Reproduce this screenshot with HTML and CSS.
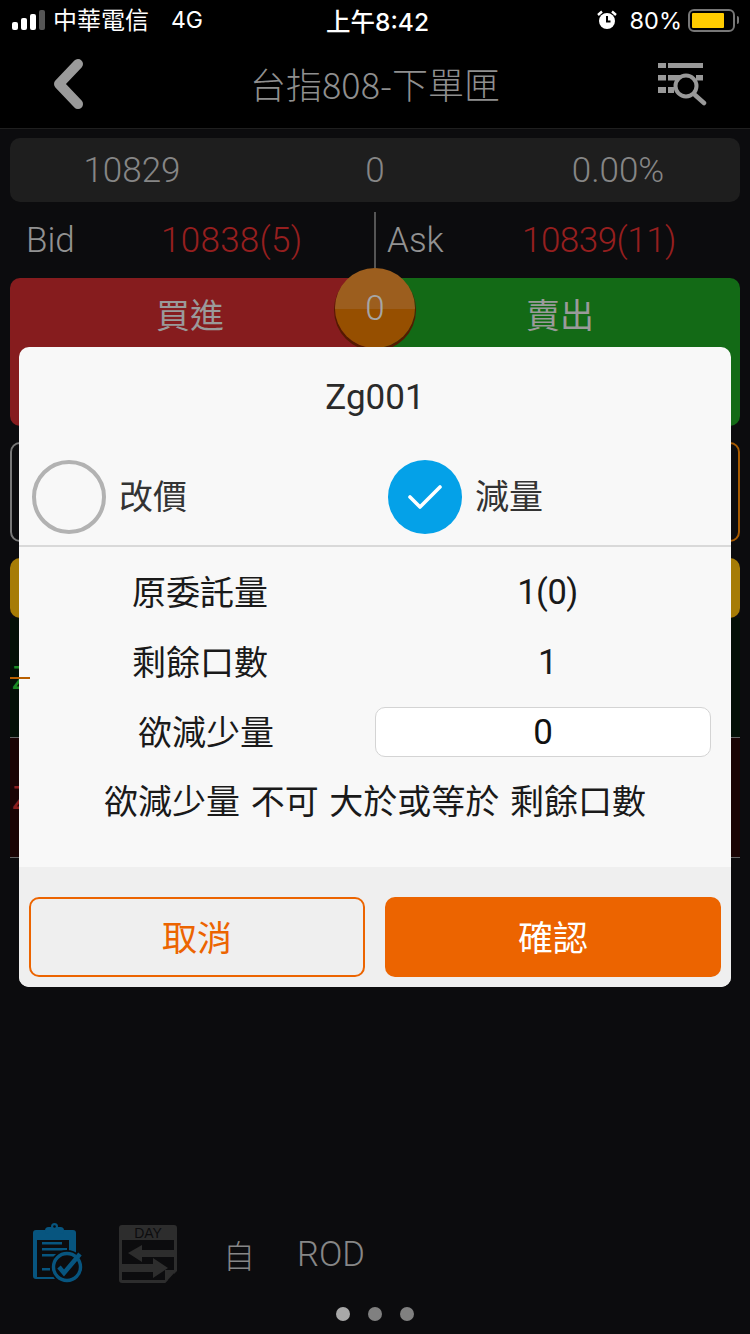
FILE: index.html
```html
<!DOCTYPE html>
<html lang="zh-Hant">
<head>
<meta charset="utf-8">
<title>台指808-下單匣</title>
<link rel="stylesheet" href="styles.css">
</head>
<body>
<div class="page">
  <header class="top">
    <div class="status">
      <div class="status-left">
        <svg class="signal" viewBox="0 0 34 20" width="34" height="20"><rect x="0" y="12" width="6" height="8" rx="2" fill="#fff"/><rect x="9" y="8" width="6" height="12" rx="2" fill="#fff"/><rect x="18" y="4" width="6" height="16" rx="2" fill="#fff"/><rect x="27" y="0" width="6" height="20" rx="2" fill="#555"/></svg>
        <span class="carrier">中華電信</span>
        <span class="net">4G</span>
      </div>
      <div class="clock">上午8:42</div>
      <div class="status-right">
        <svg class="alarm" viewBox="0 0 20 20" width="20" height="20"><circle cx="10" cy="11" r="8" fill="#fff"/><path d="M10 6v5.5h3.5" fill="none" stroke="#000" stroke-width="2"/><path d="M1 5l4-3.5M19 5l-4-3.5" stroke="#fff" stroke-width="2.4" fill="none"/></svg>
        <span class="pct">80%</span>
        <div class="battery"><div class="level"></div></div>
        <div class="nub"></div>
      </div>
    </div>
    <nav class="nav">
      <svg class="back" viewBox="0 0 34 50" width="34" height="50"><path d="M26 5L7 25l19 20" fill="none" stroke="#9a9a9a" stroke-width="10" stroke-linecap="round" stroke-linejoin="round"/></svg>
      <h1 class="title">台指808-下單匣</h1>
      <svg class="search" viewBox="0 0 50 44" width="50" height="44"><g fill="#999"><rect x="0" y="1" width="8" height="5"/><rect x="10" y="1" width="35" height="5"/><rect x="0" y="13" width="8" height="5.5"/><rect x="10" y="13" width="12" height="5.5"/><rect x="38" y="13" width="7" height="5.5"/><rect x="0" y="25" width="8" height="6"/><rect x="10" y="25" width="6" height="6"/></g><circle cx="28" cy="24" r="10.5" fill="#000" stroke="#999" stroke-width="4"/><path d="M37 33l9 8" stroke="#999" stroke-width="4.5" stroke-linecap="round"/></svg>
    </nav>
  </header>

  <main class="body">
    <section class="quote"><span>10829</span><span>0</span><span>0.00%</span></section>
    <section class="bidask">
      <div class="side"><span class="lbl">Bid</span><span class="red">10838(5)</span></div>
      <div class="side side-r"><span class="lbl">Ask</span><span class="red">10839(11)</span></div>
    </section>
    <section class="trade">
      <div class="buy">買進</div>
      <div class="sell">賣出</div>
      <div class="coin"><span>0</span></div>
    </section>
    <section class="boxes"><div class="box gray"></div><div class="box orange"></div></section>
    <section class="gold"></section>
    <section class="row row-g"><i class="mark"></i><span class="z green">Z</span></section>
    <section class="row row-r"><span class="z red2">Z</span></section>
    <div class="spacer"></div>
    <section class="tools">
      <svg class="ico" viewBox="0 0 52 62" width="52" height="62">
        <rect x="0" y="7" width="43" height="49" rx="3" fill="#07557f"/>
        <rect x="12" y="4" width="19" height="7" rx="3.5" fill="#07557f"/>
        <circle cx="21.5" cy="3.5" r="3.5" fill="#07557f"/>
        <circle cx="21.5" cy="3.5" r="1.3" fill="#0c0c0e"/>
        <rect x="4" y="17" width="32" height="37" fill="#0c0c0e"/>
        <g fill="#07557f"><rect x="9" y="19" width="20" height="2.5"/><rect x="9" y="25" width="25" height="2.5"/><rect x="9" y="31" width="20" height="2.5"/><rect x="9" y="45" width="8" height="2.5"/></g>
        <circle cx="34" cy="44" r="17" fill="#0c0c0e"/>
        <circle cx="34" cy="44" r="13.5" fill="none" stroke="#07557f" stroke-width="3.4"/>
        <path d="M26 44l5 6L47 31" fill="none" stroke="#07557f" stroke-width="4.5"/>
      </svg>
      <svg class="ico day" viewBox="0 0 58 60" width="58" height="60">
        <path d="M3 1h52a3 3 0 0 1 3 3v43L46 59H3a3 3 0 0 1-3-3V4a3 3 0 0 1 3-3z" fill="#2d2d2d"/>
        <text x="29" y="14" class="daytxt">DAY</text>
        <rect x="3" y="16" width="52" height="40" fill="#0c0c0e"/>
        <path d="M9 29l14-8v5h32v7H23v5z" fill="#2d2d2d"/>
        <path d="M0 40h34v-6l15 10-15 10v-6H0z" fill="#2d2d2d"/>
        <path d="M58 46L46 59V46z" fill="#2d2d2d"/>
      </svg>
      <span class="tool-t zi">自</span>
      <span class="tool-t rod">ROD</span>
    </section>
    <section class="dots"><i class="on"></i><i></i><i></i></section>
  </main>

  <div class="modal">
    <div class="m-head">Zg001</div>
    <div class="m-radio">
      <div class="opt"><span class="radio"></span><span>改價</span></div>
      <div class="opt"><span class="radio sel"><svg viewBox="0 0 34 24" width="34" height="24"><path d="M2 12l10 10L32 2" fill="none" stroke="#fff" stroke-width="3.6" stroke-linecap="round" stroke-linejoin="round"/></svg></span><span>減量</span></div>
    </div>
    <div class="m-body">
      <div class="m-row"><span class="k">原委託量</span><span class="v">1(0)</span></div>
      <div class="m-row"><span class="k">剩餘口數</span><span class="v">1</span></div>
      <div class="m-row"><span class="k k3">欲減少量</span><input class="inp" value="0"></div>
      <p class="note">欲減少量 不可 大於或等於 剩餘口數</p>
    </div>
    <div class="m-foot">
      <button class="btn cancel">取消</button>
      <button class="btn ok">確認</button>
    </div>
  </div>
</div>
</body>
</html>
```

FILE: styles.css
```css
* { box-sizing: border-box; }
html, body { margin: 0; padding: 0; }
body { background: #0c0c0e; font-family: Roboto, "Noto Sans CJK TC", sans-serif; }
.page { position: relative; width: 750px; height: 1334px; overflow: hidden; background: #0c0c0e; display: flex; flex-direction: column; }

.top { background: #000; height: 129px; border-bottom: 1px solid #1f1f1f; flex: none; }
.status { height: 40px; display: flex; align-items: center; justify-content: space-between; color: #fff; position: relative; padding: 0 11px 0 12px; font-family: "Inter", "Noto Sans CJK TC", sans-serif; }
.status-left { display: flex; align-items: center; }
.signal { margin-right: 7px; }
.carrier { font-size: 24px; line-height: 40px; margin-top: -2px; font-family: "Noto Sans CJK TC", sans-serif; }
.net { font-size: 23px; margin-left: 22px; }
.clock { position: absolute; left: 5px; right: 0; text-align: center; font-size: 24.5px; font-weight: 500; }
.status-right { display: flex; align-items: center; position: relative; z-index: 1; }
.alarm { margin-right: 13px; }
.pct { font-size: 23.5px; margin-right: 6px; }
.battery { width: 47px; height: 23px; border: 2px solid #777; border-radius: 6px; padding: 2px; }
.level { width: 32px; height: 15px; background: #ffcc00; border-radius: 1px; }
.nub { width: 2px; height: 8px; background: #777; margin-left: 2px; border-radius: 0 2px 2px 0; }

.nav { height: 88px; display: flex; align-items: center; justify-content: space-between; padding: 0 42px 0 52px; position: relative; }
.title { position: absolute; left: 0; right: 0; top: 18px; line-height: 50px; margin: 0; text-align: center; font-size: 36px; font-weight: 300; color: #8f8f8f; font-family: "Noto Sans CJK TC", sans-serif; }
.search { position: relative; }
.back { position: relative; }

.body { flex: 1; display: flex; flex-direction: column; padding: 9px 10px 0; min-height: 0; }
.quote { height: 64px; flex: none; background: #1e1e1e; border-radius: 10px; display: grid; grid-template-columns: 244px 1fr 244px; align-items: center; text-align: center; font-size: 35px; font-weight: 300; color: #868686; }
.bidask { height: 56px; flex: none; margin-top: 10px; display: flex; position: relative; font-size: 35px; font-weight: 300; }
.side { flex: 0 0 calc(50% + 1px); display: flex; align-items: center; padding-left: 16px; border-right: 2px solid #555; height: 56px; }
.side-r { flex: 1; border-right: 0; padding-left: 11px; }
.lbl { color: #929292; width: 135px; }
.red { color: #961f1f; letter-spacing: 0.3px; }
.side-r .red { letter-spacing: -0.5px; }
.trade { flex: none; height: 148px; margin-top: 10px; display: flex; border-radius: 10px; position: relative; font-size: 34px; color: #9a9a9a; font-family: "Noto Sans CJK TC", sans-serif; }
.buy, .sell { flex: 1; padding-top: 11px; text-align: center; }
.buy { background: #861c1e; border-radius: 10px 0 0 10px; padding-right: 10px; }
.sell { background: #136a16; border-radius: 0 10px 10px 0; }
.coin { position: absolute; left: 325px; top: -10px; width: 80px; height: 80px; border-radius: 50%; background: linear-gradient(#9c5e1e 0 51%, #964f00 51%); box-shadow: 0 2px 0 1px #551a00; text-align: center; font-family: Roboto, sans-serif; font-size: 35px; font-weight: 300; color: #a6a6a6; line-height: 80px; }
.coin span { position: relative; top: 1px; display: block; }
.boxes { flex: none; height: 100px; margin-top: 16px; display: flex; gap: 20px; }
.box { flex: 1; border-radius: 10px; border: 2px solid #777; }
.box.orange { border-color: #a85a00; }
.gold { flex: none; height: 60px; margin-top: 16px; background: #a67c06; border-radius: 10px; }
.row { flex: none; height: 120px; border-bottom: 1px solid #666; position: relative; font-size: 33px; }
.row-g { background: #031006; }
.row-r { background: #1a0404; }
.z { position: absolute; left: 2px; top: 43px; line-height: 1; font-family: "Liberation Sans", sans-serif; }
.green { color: #1a8a22; }
.red2 { color: #8c1d1d; }
.mark { position: absolute; left: 0; top: 59px; width: 20px; height: 2px; background: #b85f00; z-index: 1; }
.spacer { flex: 1; }
.tools { flex: none; height: 62px; display: flex; align-items: center; padding-left: 23px; position: relative; }
.ico { display: block; flex: none; }
.day { margin-left: 34px; }
.daytxt { font-family: "Liberation Sans", sans-serif; font-size: 14px; fill: #0c0c0e; text-anchor: middle; }
.tool-t { color: #878787; font-size: 32px; }
.zi { margin-left: 46px; line-height: 40px; font-weight: 300; font-family: "Noto Sans CJK TC", sans-serif; }
.rod { margin-left: 42px; font-family: Roboto, sans-serif; font-weight: 300; font-size: 34.5px; }
.dots { flex: none; height: 49px; display: flex; justify-content: center; gap: 18px; padding-top: 22px; }
.dots i { width: 14px; height: 14px; border-radius: 50%; background: #808080; }
.dots i.on { background: #a8a8a8; }

.modal { position: absolute; left: 19px; top: 347px; width: 712px; height: 640px; background: #f8f8f8; border-radius: 10px; overflow: hidden; display: flex; flex-direction: column; color: #222; }
.m-head { height: 99px; flex: none; text-align: center; font-size: 35px; font-weight: 400; line-height: 102px; color: #2a2a2a; }
.m-radio { height: 101px; flex: none; border-bottom: 2px solid #d9d9d9; display: flex; padding: 14px 0 0 13px; font-size: 34px; font-family: "Noto Sans CJK TC", sans-serif; color: #333; }
.opt { flex: none; display: flex; align-items: flex-start; gap: 13px; width: 356px; line-height: 70px; }
.radio { width: 74px; height: 74px; border-radius: 50%; border: 4px solid #b2b2b2; flex: none; display: flex; align-items: center; justify-content: center; }
.radio.sel { background: #04a1e8; border: 0; }
.m-body { flex: 1; padding-top: 10px; font-size: 34px; color: #1a1a1a; font-family: "Noto Sans CJK TC", sans-serif; }
.m-row { height: 70px; display: flex; align-items: center; }
.k { width: 356px; padding-left: 113px; margin-bottom: 4px; }
.k3 { padding-left: 119px; }
.v { flex: none; width: 345px; text-align: center; font-family: Roboto, sans-serif; font-weight: 400; font-size: 34.5px; letter-spacing: -0.5px; }
.inp { width: 336px; height: 50px; background: #fff; border: 1.5px solid #d4d4d4; border-radius: 10px; text-align: center; font-size: 35px; font-weight: 400; font-family: Roboto, sans-serif; color: #111; padding: 0; outline: none; }
.note { margin: 0; height: 66px; line-height: 66px; text-align: center; word-spacing: 3px; white-space: nowrap; }
.m-foot { height: 120px; flex: none; background: #efefef; display: flex; gap: 20px; padding: 30px 10px 10px; }
.btn { flex: 0 0 336px; height: 80px; border-radius: 10px; font-size: 35px; font-family: "Noto Sans CJK TC", sans-serif; padding: 0 0 4px; }
.cancel { background: transparent; border: 2px solid #ec6400; color: #ec6400; }
.ok { background: #ec6400; border: 0; color: #fff; }
```
